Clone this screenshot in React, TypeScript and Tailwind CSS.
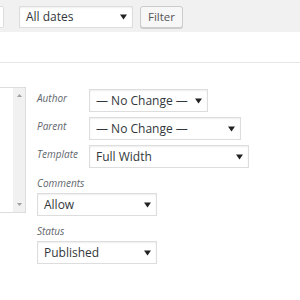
import React from 'react'

const font = { fontFamily: '"Open Sans", "Noto Sans", sans-serif' }

function Arrow() {
  return (
    <svg width="7" height="6" viewBox="0 0 7 6" className="shrink-0">
      <path d="M0 0.5 L7 0.5 L3.5 5.5 Z" fill="#222" />
    </svg>
  )
}

function Select({ value, width, height = 'h-[23px]' }: { value: string; width: string; height?: string }) {
  return (
    <div
      className={`${width} ${height} flex items-center justify-between pl-[6px] pr-[5px] bg-white border border-[#dddddd] shadow-[inset_0_1px_2px_rgba(0,0,0,0.07)] text-[12px] text-[#32373c]`}
    >
      <span className="leading-none whitespace-nowrap">{value}</span>
      <Arrow />
    </div>
  )
}

function Label({ children, className = '' }: { children: React.ReactNode; className?: string }) {
  return <div className={`text-[10px] italic leading-[14px] text-[#5f666d] ${className}`}>{children}</div>
}

export default function App() {
  return (
    <div className="w-[300px] h-[300px] overflow-hidden bg-white" style={font}>
      {/* filter bar */}
      <div className="h-[32px] bg-[#f1f1f1] flex items-start pt-[6px]">
        <div className="w-[4px] h-[22px] bg-white border-y border-r border-[#dddddd] rounded-r-[2px]" />
        <div className="ml-[15px]">
          <Select value="All dates" width="w-[114px]" height="h-[22px]" />
        </div>
        <button className="ml-[7px] w-[43px] h-[22px] bg-[#f7f7f7] border border-[#cccccc] rounded-[3px] shadow-[0_1px_0_#cccccc] text-[11.5px] text-[#555555] leading-none">
          Filter
        </button>
      </div>

      <div className="h-[31px] border-b border-[#e5e5e5]" />

      <div className="flex">
        {/* scroll list */}
        <div className="mt-[24px] w-[26px] h-[126px] flex border-y border-r border-[#dddddd] bg-white">
          <div className="w-[13px]" />
          <div className="w-[12px] bg-[#f1f1f1] flex flex-col items-center justify-between py-[6px]">
            <svg width="5" height="3" viewBox="0 0 5 3">
              <path d="M0 3 L5 3 L2.5 0 Z" fill="#a0a0a0" />
            </svg>
            <svg width="5" height="3" viewBox="0 0 5 3">
              <path d="M0 0 L5 0 L2.5 3 Z" fill="#a0a0a0" />
            </svg>
          </div>
        </div>

        {/* fields */}
        <div className="ml-[11px] mt-[26px] flex flex-col">
          <div className="flex flex-col gap-[5px]">
            <div className="flex items-start">
              <Label className="w-[52px] pt-[2px]">Author</Label>
              <Select value="— No Change —" width="w-[119px]" />
            </div>
            <div className="flex items-start">
              <Label className="w-[52px] pt-[2px]">Parent</Label>
              <Select value="— No Change —" width="w-[152px]" />
            </div>
            <div className="flex items-start">
              <Label className="w-[52px] pt-[2px]">Template</Label>
              <Select value="Full Width" width="w-[160px]" />
            </div>
          </div>

          <Label className="mt-[8px]">Comments</Label>
          <div className="mt-[3px]">
            <Select value="Allow" width="w-[120px]" />
          </div>

          <Label className="mt-[8px]">Status</Label>
          <div className="mt-[3px]">
            <Select value="Published" width="w-[120px]" />
          </div>
        </div>
      </div>
    </div>
  )
}
